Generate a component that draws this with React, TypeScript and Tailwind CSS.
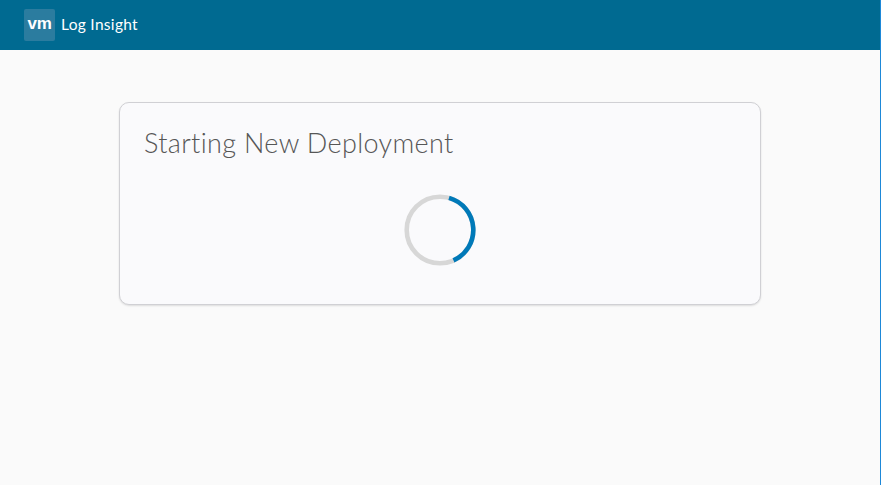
import React from 'react'

const Spinner = () => {
    return (
        <svg width="72" height="72" viewBox="0 0 72 72" fill="none">
            <circle cx="36" cy="36" r="33.3" stroke="#d7d7d7" strokeWidth="4.6" />
            <path d="M 45 3.9 A 33.3 33.3 0 0 1 49.5 66.4" stroke="#0079b8" strokeWidth="4.6" />
        </svg>
    )
}

const App = () => {
    return (
        <div className="h-screen flex flex-col bg-[#fafafa] border-r border-[#1e88d8] font-['Lato','Liberation_Sans',sans-serif]">
            <header className="h-[50px] shrink-0 bg-[#006a91] flex items-center pl-6">
                <div className="w-[31px] h-[32px] rounded-[2px] bg-[#2b7c9f] flex items-center justify-center">
                    <span className="text-white font-bold text-[17px] leading-none tracking-[-0.3px] font-['Liberation_Sans',sans-serif] pb-[3px]">vm</span>
                </div>
                <span className="ml-[6px] text-white text-[15.5px] tracking-[0.3px]">Log Insight</span>
            </header>
            <main className="flex-1 pt-[52px] pl-[119px]">
                <div className="w-[642px] h-[203px] rounded-[10px] bg-[#fafafc] border border-[#d0d0d4] shadow-[0_1px_2px_rgba(0,0,0,0.12)] px-6 pt-[22px]">
                    <h1 className="text-[27px] leading-[36px] font-light tracking-[0.35px] text-[#565656]">Starting New Deployment</h1>
                    <div className="mt-[33px] flex justify-center">
                        <Spinner />
                    </div>
                </div>
            </main>
        </div>
    )
}

export default App
